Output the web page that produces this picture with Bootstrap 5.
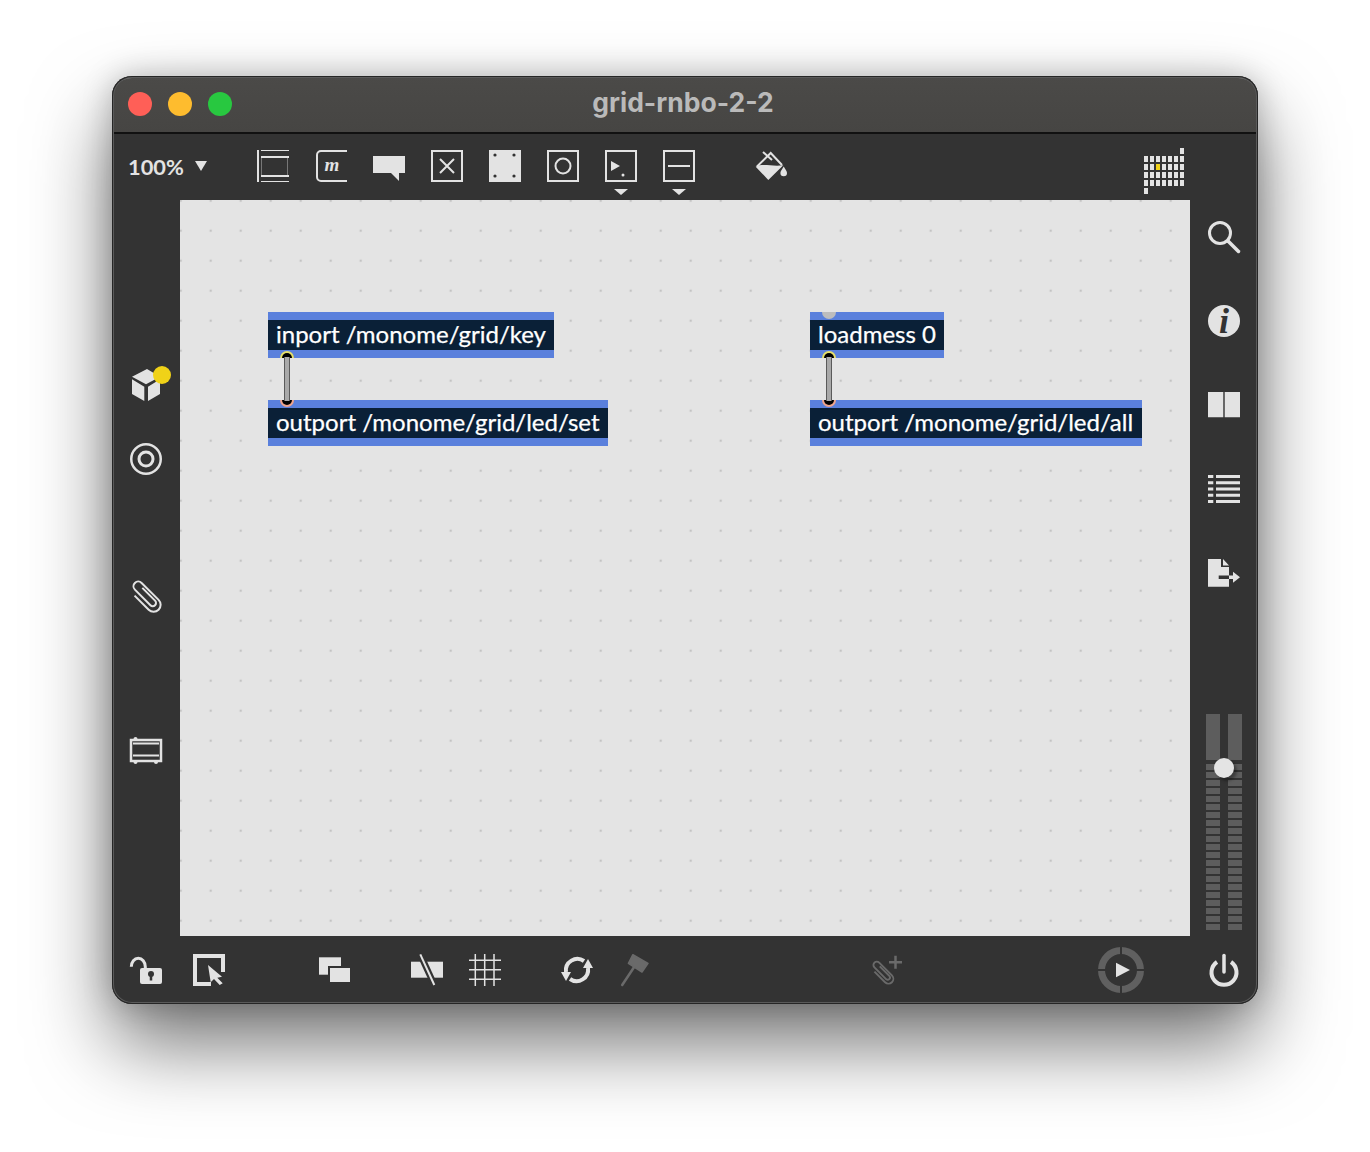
<!DOCTYPE html>
<html lang="en">
<head>
    <meta charset="UTF-8">
    <title>grid-rnbo-2-2</title>
    <link href="https://cdn.jsdelivr.net/npm/bootstrap@5.3.0/dist/css/bootstrap.min.css" rel="stylesheet">
    <style>
        body {
            background: #fff;
            height: 1152px;
            overflow: hidden;
        }
        svg {
            flex: none;
            overflow: visible;
        }
        .app-window {
            position: relative;
            width: 1146px;
            height: 928px;
            margin: 76px 0 0 112px;
            background: #333;
            border-radius: 20px;
            box-shadow: 0 40px 80px rgba(0, 0, 0, .55), 0 0 30px rgba(0, 0, 0, .22);
        }
        .app-window::after {
            content: "";
            position: absolute;
            inset: 0;
            border-radius: 20px;
            box-shadow: inset 0 0 0 1px #262626, inset 0 0 0 2px #5a5a5a, inset 0 2px 0 0 #858585;
            pointer-events: none;
        }
        .title-bar {
            display: grid;
            grid-template-columns: 1fr auto 1fr;
            height: 58px;
            padding: 0 20px 0 16px;
            background: linear-gradient(#4b4a48, #464543);
            border-bottom: 2px solid #111;
            border-radius: 20px 20px 0 0;
        }
        .light {
            width: 24px;
            height: 24px;
            border-radius: 50%;
        }
        .light-red { background: #ff5f57; }
        .light-amber { background: #febc2e; }
        .light-green { background: #28c840; }
        .title-text {
            height: 54px;
            font: 700 26.5px/50px Inter, sans-serif;
            color: #bababa;
        }
        .tool-bar {
            height: 66px;
            padding: 16px 74px 0 16px;
        }
        .zoom-text {
            width: 67px;
            font: 700 21.8px/32px Lato, sans-serif;
            color: #e3e3e3;
            padding-top: 1px;
        }
        .zoom-caret { margin: 11px 50px 0 0; }
        .tool-gap { gap: 26px; }
        .tool-paint { margin-left: 34px; }
        .tool-grid { margin: -2px 0 0 auto; }
        .main-row { height: 736px; }
        .side-col {
            width: 68px;
            padding-left: 18px;
        }
        .left-col { padding-top: 169px; }
        .left-target { margin-top: 42px; }
        .left-clip { margin-top: 105px; }
        .left-rack { margin-top: 122px; }
        .right-col {
            padding-top: 21px;
            gap: 52px;
        }
        .patcher {
            position: relative;
            width: 1010px;
            background-color: #e4e4e4;
            background-image: radial-gradient(circle, #c4c4c4 1.4px, transparent 1.6px);
            background-size: 30px 30px;
            background-position: -14.3px -14.3px;
        }
        .max-obj {
            position: absolute;
            height: 46px;
            padding: 0 8px;
            background: #0a2037;
            border-top: 8px solid #5a80dc;
            border-bottom: 8px solid #5a80dc;
            font: 400 24px/28px Lato, sans-serif;
            color: #fff;
            white-space: nowrap;
            -webkit-text-stroke: .25px #fff;
        }
        .obj-a { left: 88px; top: 112px; }
        .obj-b { left: 88px; top: 200px; }
        .obj-c { left: 630px; top: 112px; }
        .obj-d { left: 630px; top: 200px; width: 332px; }
        .cord-layer {
            position: absolute;
            inset: 0;
            width: 100%;
            height: 100%;
        }
        .meter {
            position: relative;
            width: 36px;
            height: 216px;
            margin: 73px 0 0 -2px;
        }
        .meter-bar { width: 14px; }
        .meter-top {
            height: 46px;
            margin-bottom: 4px;
            background: #5d5d5d;
        }
        .meter-steps {
            height: 166px;
            background: repeating-linear-gradient(#5d5d5d 0 6px, transparent 6px 8px);
        }
        .meter-knob {
            position: absolute;
            left: 8px;
            top: 44px;
            width: 20px;
            height: 20px;
            border-radius: 50%;
            background: #e4e4e4;
            box-shadow: 3px 3px 3px rgba(0, 0, 0, .35);
        }
        .bottom-bar {
            height: 68px;
            padding: 18px 0 0 18px;
        }
        .bb-select { margin-left: 31px; }
        .bb-windows { margin-left: 94px; }
        .bb-hide { margin-left: 60px; }
        .bb-grid { margin-left: 26px; }
        .bb-sync { margin-left: 60px; }
        .bb-hammer { margin-left: 28px; }
        .bb-clip { margin-left: 218px; }
        .bb-play { margin: -7px 0 0 195px; }
        .bb-power { margin-left: 64px; }
        .icon-fill { fill: #e3e3e3; }
        .icon-line {
            fill: none;
            stroke: #e3e3e3;
            stroke-width: 2;
        }
        .icon-dim { fill: #6a6a6a; }
        .icon-dim-line {
            fill: none;
            stroke: #6a6a6a;
            stroke-width: 2;
        }
        .sw-15 { stroke-width: 1.5; }
        .sw-25 { stroke-width: 2.5; }
        .sw-3 { stroke-width: 3; }
        .sw-35 { stroke-width: 3.5; }
        .sw-4 { stroke-width: 4; }
        .icon-serif {
            font-family: "Liberation Serif", serif;
            font-style: italic;
            font-weight: 700;
        }
    </style>
</head>
<body>
    <div class="app-window d-flex flex-column">
        <div class="title-bar align-items-center">
            <div class="d-flex gap-3">
                <div class="light light-red"></div>
                <div class="light light-amber"></div>
                <div class="light light-green"></div>
            </div>
            <div class="title-text">grid-rnbo-2-2</div>
            <div></div>
        </div>

        <div class="tool-bar d-flex align-items-start">
            <div class="zoom-text">100%</div>
            <svg class="zoom-caret" width="12" height="10" viewBox="0 0 12 10"><path class="icon-fill" d="M0 0H12L6 10Z"/></svg>
            <div class="d-flex align-items-start tool-gap">
                <svg width="32" height="32" viewBox="0 0 32 32">
                    <path class="icon-fill" d="M0 0H2V32H0ZM4 0H32V1H4ZM4 6H32V8H4ZM4 25H32V27H4ZM4 31H32V32H4Z"/>
                    <path d="M4.5 8V25M30.5 8V25" stroke="#777" fill="none"/>
                </svg>
                <svg width="32" height="32" viewBox="0 0 32 32">
                    <path class="icon-line" d="M32 1H6A4 4 0 0 0 2 5V27A4 4 0 0 0 6 31H32"/>
                    <text class="icon-fill icon-serif" x="17" y="21" font-size="19" text-anchor="middle">m</text>
                </svg>
                <svg width="32" height="32" viewBox="0 0 32 32"><path class="icon-fill" d="M0 6H32V23H26V31L18 23H0Z"/></svg>
                <svg width="32" height="32" viewBox="0 0 32 32">
                    <rect class="icon-line" x="1" y="1" width="30" height="30"/>
                    <path class="icon-line" d="M9 9L23 23M23 9L9 23"/>
                </svg>
                <svg width="32" height="32" viewBox="0 0 32 32">
                    <rect class="icon-fill" width="32" height="32"/>
                    <circle cx="6" cy="5" r="1.6" fill="#333"/><circle cx="25" cy="5" r="1.6" fill="#333"/>
                    <circle cx="6" cy="26" r="1.6" fill="#333"/><circle cx="25" cy="26" r="1.6" fill="#333"/>
                </svg>
                <svg width="32" height="32" viewBox="0 0 32 32">
                    <rect class="icon-line" x="1" y="1" width="30" height="30"/>
                    <circle class="icon-line" cx="16" cy="16" r="7.5"/>
                </svg>
                <svg width="32" height="46" viewBox="0 0 32 46">
                    <rect class="icon-line" x="1" y="1" width="30" height="30"/>
                    <path class="icon-fill" d="M6 11L15 16L6 21Z"/>
                    <circle class="icon-fill" cx="18" cy="25" r="1.5"/>
                    <path class="icon-fill" d="M9 39H23L16 45Z"/>
                </svg>
                <svg width="32" height="46" viewBox="0 0 32 46">
                    <rect class="icon-line" x="1" y="1" width="30" height="30"/>
                    <path class="icon-line" d="M5 16H27"/>
                    <path class="icon-fill" d="M9 39H23L16 45Z"/>
                </svg>
                <svg class="tool-paint" width="32" height="32" viewBox="0 0 32 32">
                    <path class="icon-line" d="M2 16.5L15.7 3L27 15"/>
                    <path class="icon-line" d="M8 2L17 10"/>
                    <path class="icon-fill" d="M.7 16.7C8 13 17 17 28.3 15.3L13.3 30Z"/>
                    <path class="icon-fill" d="M28.7 16.5C30 19 32 21 32 23A3.3 3.3 0 0 1 25.4 23C25.4 21 27.4 19 28.7 16.5Z"/>
                </svg>
            </div>
            <svg class="tool-grid" width="40" height="46" viewBox="0 0 40 46">
                <defs>
                    <pattern id="gridCells" width="6" height="8" patternUnits="userSpaceOnUse"><rect class="icon-fill" width="4" height="6"/></pattern>
                </defs>
                <rect y="8" width="40" height="32" fill="url(#gridCells)"/>
                <rect class="icon-fill" x="36" width="4" height="6"/>
                <rect class="icon-fill" y="40" width="4" height="6"/>
                <rect x="12" y="16" width="4" height="6" fill="#f0d218"/>
            </svg>
        </div>

        <div class="main-row d-flex">
            <div class="side-col left-col d-flex flex-column">
                <svg width="42" height="32" viewBox="0 0 42 32">
                    <path class="icon-fill" d="M17 0L30 7.7L16 15.3L2 7.7ZM2 10.3L14.3 17.7V32L2 25ZM18 17.7L30 10.3V25L18 32Z"/>
                    <circle cx="32" cy="6" r="9" fill="#f0d218"/>
                </svg>
                <svg class="left-target" width="32" height="32" viewBox="0 0 32 32">
                    <circle class="icon-line sw-25" cx="16" cy="16" r="14.750"/>
                    <circle class="icon-line sw-3" cx="16" cy="16" r="7"/>
                </svg>
                <svg class="left-clip" width="32" height="32" viewBox="0 0 32 32">
                    <path class="icon-line" transform="translate(-.5 0) rotate(-45 16 16)" d="M19.500 8V26A3.250 3.250 0 0 1 13 26V4A4.750 4.750 0 0 1 22.500 4V28A7 7 0 0 1 8.500 28V8"/>
                </svg>
                <svg class="left-rack" width="32" height="32" viewBox="0 0 32 32">
                    <circle class="icon-fill" cx="5.500" cy="5" r="2"/>
                    <circle class="icon-fill" cx="5.500" cy="28" r="2"/>
                    <circle class="icon-fill" cx="26" cy="28" r="2"/>
                    <rect class="icon-line sw-25" x="1" y="6" width="30" height="21"/>
                    <path class="icon-line" d="M3 9.500H29M3 21.500H29"/>
                </svg>
            </div>

            <div class="patcher">
                <div class="max-obj obj-a">inport /monome/grid/key</div>
                <div class="max-obj obj-b">outport /monome/grid/led/set</div>
                <div class="max-obj obj-c">loadmess 0</div>
                <div class="max-obj obj-d">outport /monome/grid/led/all</div>
                <svg class="cord-layer" viewBox="0 0 1010 736">
                    <path d="M642 112H656A7 7 0 0 1 642 112Z" fill="#bdbdbd"/>
                    <g>
                        <path d="M100 158A7 7 0 0 1 114 158Z" fill="#e6df6a"/>
                        <path d="M102 158A5 5 0 0 1 112 158Z" fill="#000"/>
                        <path d="M100 200A7 7 0 0 0 114 200Z" fill="#efa48c"/>
                        <path d="M102 200A5 5 0 0 0 112 200Z" fill="#000"/>
                        <path d="M107 157V201" stroke="#5a5a5a" stroke-width="6"/>
                        <path d="M107 157V201" stroke="#a9a9a9" stroke-width="4"/>
                    </g>
                    <g>
                        <path d="M642 158A7 7 0 0 1 656 158Z" fill="#e6df6a"/>
                        <path d="M644 158A5 5 0 0 1 654 158Z" fill="#000"/>
                        <path d="M642 200A7 7 0 0 0 656 200Z" fill="#efa48c"/>
                        <path d="M644 200A5 5 0 0 0 654 200Z" fill="#000"/>
                        <path d="M649 157V201" stroke="#5a5a5a" stroke-width="6"/>
                        <path d="M649 157V201" stroke="#a9a9a9" stroke-width="4"/>
                    </g>
                </svg>
            </div>

            <div class="side-col right-col d-flex flex-column">
                <svg width="32" height="32" viewBox="0 0 32 32">
                    <circle class="icon-line sw-3" cx="12" cy="12" r="10.500"/>
                    <path class="icon-line sw-35" d="M20 20L30.500 30.500" stroke-linecap="round"/>
                </svg>
                <svg width="32" height="32" viewBox="0 0 32 32">
                    <circle class="icon-fill" cx="16" cy="16" r="16"/>
                    <text class="icon-serif" x="16" y="28" font-size="36" text-anchor="middle" fill="#333">i</text>
                </svg>
                <svg width="32" height="32" viewBox="0 0 32 32">
                    <path class="icon-fill" d="M0 3H15.300V28.300H0ZM16.700 3H32V28.300H16.700Z"/>
                </svg>
                <svg width="32" height="32" viewBox="0 0 32 32">
                    <path class="icon-fill" d="M0 2H5.300V5H0ZM8 2H32V5H8ZM0 8.200H5.300V11.200H0ZM8 8.200H32V11.200H8ZM0 14.500H5.300V17.500H0ZM8 14.500H32V17.500H8ZM0 20.700H5.300V23.700H0ZM8 20.700H32V23.700H8ZM0 27H5.300V30H0ZM8 27H32V30H8Z"/>
                </svg>
                <svg width="32" height="32" viewBox="0 0 32 32">
                    <path class="icon-fill" d="M0 2H13V10H21V29.700H0ZM15 2L21 8.500H15Z"/>
                    <path d="M10.700 18.500H21V22H10.700Z" fill="#333"/>
                    <path class="icon-fill" d="M21 18.500H26V22H21ZM25 14.700L32 20.200L25 25.700Z"/>
                </svg>
                <div class="meter">
                    <div class="d-flex justify-content-between">
                        <div class="meter-bar"><div class="meter-top"></div><div class="meter-steps"></div></div>
                        <div class="meter-bar"><div class="meter-top"></div><div class="meter-steps"></div></div>
                    </div>
                    <div class="meter-knob"></div>
                </div>
            </div>
        </div>

        <div class="bottom-bar d-flex align-items-start">
            <svg width="32" height="32" viewBox="0 0 32 32">
                <path class="icon-line sw-3" d="M1.300 12.700A7 8.500 0 0 1 15.300 12.700V15"/>
                <rect class="icon-fill" x="10" y="14" width="22" height="16" rx="2"/>
                <circle cx="21" cy="20" r="3" fill="#333"/>
                <path d="M21 20V26.500" stroke="#333" stroke-width="2.500"/>
            </svg>
            <svg class="bb-select" width="32" height="32" viewBox="0 0 32 32">
                <path class="icon-fill" d="M0 0H32V18H28V4H4V28H18V32H0Z"/>
                <path class="icon-fill" d="M15 11L29 22.700L24.300 23.700L29.700 29.300L26.700 31L21 25L17.700 28.300Z"/>
            </svg>
            <svg class="bb-windows" width="32" height="32" viewBox="0 0 32 32">
                <path class="icon-fill" d="M0 3.300H22V20.700H0Z"/>
                <path class="icon-fill" d="M10 13H32V29H10Z" stroke="#333" stroke-width="2"/>
            </svg>
            <svg class="bb-hide" width="32" height="32" viewBox="0 0 32 32">
                <path class="icon-fill" d="M0 7.700H32V23.700H0Z"/>
                <path d="M9.300 .3L23.300 31" stroke="#333" stroke-width="6.500" fill="none"/>
                <path class="icon-line" d="M9.300 .3L23.300 31"/>
            </svg>
            <svg class="bb-grid" width="32" height="32" viewBox="0 0 32 32">
                <path class="icon-line sw-15" d="M6.300 0V32M15.700 0V32M25 0V32M0 6.300H32M0 15.700H32M0 25.300H32"/>
            </svg>
            <svg class="bb-sync" width="32" height="32" viewBox="0 0 32 32">
                <path class="icon-line sw-4" d="M5 18A11.500 11.500 0 0 1 23 7"/>
                <path class="icon-line sw-4" d="M27 14A11.500 11.500 0 0 1 9 25"/>
                <path class="icon-fill" d="M27 5L32 14H22ZM5 27L0 18H10Z"/>
            </svg>
            <svg class="bb-hammer" width="32" height="32" viewBox="0 0 32 32">
                <path class="icon-dim" d="M11.900 .7L27 9.300L21 18L7.400 9.300Z" stroke="#6a6a6a" stroke-width="1.500" stroke-linejoin="round"/>
                <path class="icon-dim-line sw-25" d="M13 13.300L1.200 31" stroke-linecap="round"/>
            </svg>
            <svg class="bb-clip" width="32" height="32" viewBox="0 0 32 32">
                <path class="icon-dim-line sw-25" transform="translate(11.900 18.700) scale(.75) rotate(-45) translate(-16 -17)" d="M19 8V26A3 3 0 0 1 13 26V4A4.500 4.500 0 0 1 22 4V28A6.500 6.500 0 0 1 9 28V8"/>
                <path class="icon-dim-line sw-25" d="M24.500 1.800V14.800M18 8.300H31"/>
            </svg>
            <svg class="bb-play" width="46" height="46" viewBox="0 0 46 46">
                <circle cx="23" cy="23" r="19.500" fill="none" stroke="#606060" stroke-width="7"/>
                <path d="M23 0V8M23 38V46M0 23H8M38 23H46" stroke="#333" stroke-width="2"/>
                <path class="icon-fill" d="M18 15.700L32 23L18 30.300Z"/>
            </svg>
            <svg class="bb-power" width="32" height="32" viewBox="0 0 32 32">
                <path class="icon-line sw-4" d="M9 8A12.500 12.500 0 1 0 23 8"/>
                <path class="icon-line sw-35" d="M16 1.500V18" stroke-linecap="round"/>
            </svg>
        </div>
    </div>

    <script src="https://cdn.jsdelivr.net/npm/bootstrap@5.3.0/dist/js/bootstrap.bundle.min.js"></script>
</body>
</html>
